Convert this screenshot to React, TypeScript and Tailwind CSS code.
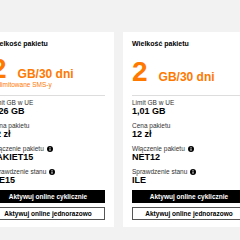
import React from "react";

const ORANGE = "text-[#ff7900]";

function Info() {
  return (
    <svg width="6" height="6" viewBox="0 0 12 12" className="ml-[3px] inline-block">
      <circle cx="6" cy="6" r="6" fill="#000" />
      <rect x="5" y="5" width="2" height="4.5" fill="#fff" />
      <rect x="5" y="2.3" width="2" height="1.8" fill="#fff" />
    </svg>
  );
}

function Row({ label, value, info }: { label: string; value: string; info?: boolean }) {
  return (
    <div className="flex flex-col">
      <div className="flex items-center text-[6.5px] leading-[8px] text-[#333] whitespace-nowrap">
        {label}
        {info && <Info />}
      </div>
      <div className="text-[9px] leading-[9px] font-bold text-black whitespace-nowrap">{value}</div>
    </div>
  );
}

function Card({ sub, limit, price, code, check }: { sub?: string; limit: string; price: string; code: string; check: string }) {
  return (
    <div className="w-[132px] shrink-0 bg-white px-[9px] pt-[8px] pb-[7px] flex flex-col">
      <div className="text-[7px] leading-[8px] font-bold text-black whitespace-nowrap">Wielkość pakietu</div>
      <div className="h-[48px] flex flex-col justify-center border-b border-[#dddddd]">
        <div className={`flex items-baseline ${ORANGE}`}>
          <span className="text-[28px] leading-[28px] font-bold">2</span>
          <span className="ml-[11px] text-[12px] font-bold whitespace-nowrap">GB/30 dni</span>
        </div>
        {sub && <div className={`mt-[-2px] text-[6.5px] leading-[7px] whitespace-nowrap ${ORANGE}`}>{sub}</div>}
      </div>
      <div className="pt-[3px] flex flex-col gap-[6px]">
        <Row label="Limit GB w UE" value={limit} />
        <Row label="Cena pakietu" value={price} />
        <Row label="Włączenie pakietu" value={code} info />
        <Row label="Sprawdzenie stanu" value={check} info />
      </div>
      <div className="mt-[5px] flex flex-col gap-[4px]">
        <div className="h-[13px] bg-black text-white text-[6.5px] font-bold flex items-center justify-center whitespace-nowrap">
          Aktywuj online cyklicznie
        </div>
        <div className="h-[13px] bg-white border border-[#555] text-black text-[6.5px] font-bold flex items-center justify-center whitespace-nowrap">
          Aktywuj online jednorazowo
        </div>
      </div>
    </div>
  );
}

export default function App() {
  return (
    <div
      className="w-[240px] h-[240px] overflow-hidden bg-[#f2f2f2]"
      style={{ fontFamily: '"Liberation Sans", Arial, sans-serif' }}
    >
      <div className="flex gap-[9px] ml-[-18px] pt-[32px]">
        <Card sub="nielimitowane SMS-y" limit="1,26 GB" price="12 zł" code="PAKIET15" check="ILE15" />
        <Card limit="1,01 GB" price="12 zł" code="NET12" check="ILE" />
      </div>
    </div>
  );
}
